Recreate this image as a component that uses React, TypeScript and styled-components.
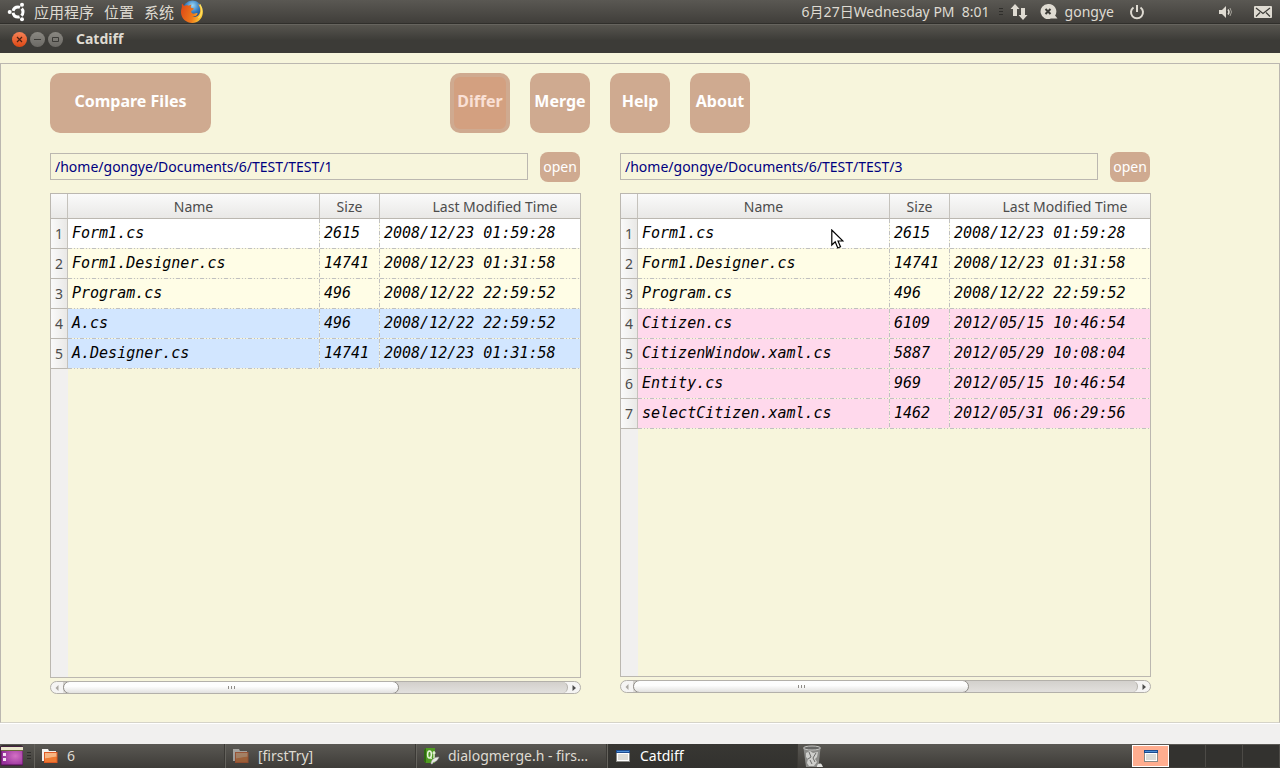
import React from "react";
import styled, { createGlobalStyle, css } from "styled-components";

const UI = `"Noto Sans", "Noto Sans CJK SC", sans-serif`;
const LINE = "#bbb7b0";
const PAPER = "#f7f5dc";

const GlobalStyle = createGlobalStyle`
  * { box-sizing: border-box; }
  body { margin: 0; font: 14px/20px ${UI}; color: #4c4c4c; background: ${PAPER}; }
  button, input { font: inherit; margin: 0; }
`;

const Screen = styled.div`
  display: flex;
  flex-direction: column;
  min-height: 100vh;
  overflow: hidden;
`;

/* ---------- desktop panel ---------- */
const Panel = styled.header`
  display: flex;
  align-items: center;
  height: 24px;
  padding: 0 8px 0 7px;
  color: #dfdbd2;
  background: linear-gradient(#5a5853, #403e3a);
  border-bottom: 1px solid #302f2b;
`;
const MenuList = styled.nav`
  display: flex;
  align-items: center;
  gap: 10px;
  margin-right: 6px;
`;
const PlainButton = styled.button`
  display: flex;
  align-items: center;
  gap: 7px;
  padding: 0;
  border: 0;
  background: none;
  color: inherit;
  font-size: 15px;
  white-space: nowrap;
`;
const Tray = styled.div`
  display: flex;
  align-items: center;
  margin-left: auto;
`;
const Clock = styled.time`
  margin-right: 9px;
  white-space: pre;
`;
const TrayItem = styled(PlainButton)<{ $before: number }>`
  margin-left: ${(p) => p.$before}px;
  font-size: 14px;
`;

/* ---------- window ---------- */
const TitleBar = styled.div`
  display: flex;
  align-items: center;
  height: 29px;
  padding: 0 12px;
  background: linear-gradient(#57554f, #3c3b37 55%);
  border-top: 1px solid #66645e;
`;
const WindowButton = styled.button<{ $close?: boolean }>`
  display: grid;
  place-items: center;
  width: 15px;
  height: 15px;
  margin-right: 3px;
  padding: 0;
  border: 0;
  border-radius: 50%;
  background: ${(p) => (p.$close ? "linear-gradient(#f58257, #dd4814)" : "linear-gradient(#8a8882, #6b6964)")};
`;
const WindowTitle = styled.h1`
  margin: 0 0 0 10px;
  font-size: 14px;
  line-height: 20px;
  color: #dfdbd2;
`;
const Frame = styled.main`
  display: flex;
  flex: 1;
  flex-direction: column;
  margin-top: 10px;
  padding: 9px 128px 28px 49px;
  border: 1px solid ${LINE};
  border-bottom-color: #d5d3c8;
`;
const Toolbar = styled.div`
  display: grid;
  grid-template-columns: 400px auto;
  justify-content: start;
  margin-bottom: 19px;
`;
const ToolGroup = styled.div`
  display: flex;
  gap: 20px;
`;
const ToolButton = styled.button<{ $wide?: boolean; $pressed?: boolean }>`
  width: ${(p) => (p.$wide ? 161 : 60)}px;
  height: 60px;
  padding: 0 0 4px;
  border: 4px solid #cfaa90;
  border-radius: 10px;
  background: #cfaa90;
  color: #fff;
  font-size: 16px;
  font-weight: 700;
  white-space: nowrap;
  ${(p) =>
    p.$pressed &&
    css`
      background: #d3a080;
      color: #fae0d6;
    `}
`;
const Panes = styled.div`
  display: grid;
  flex: 1;
  grid-template-columns: 1fr 1fr;
  gap: 39px;
`;
const Pane = styled.section<{ $bottom: number }>`
  display: flex;
  flex-direction: column;
  min-width: 0;
  padding-bottom: ${(p) => p.$bottom}px;
`;
const PathRow = styled.div`
  display: flex;
  align-items: center;
  gap: 12px;
  height: 30px;
  margin: 0 1px 11px 0;
`;
const PathInput = styled.input`
  && {
    margin-bottom: 1px;
  }
  flex: 1;
  min-width: 0;
  height: 27px;
  padding: 0 4px;
  border: 1px solid ${LINE};
  background: transparent;
  color: #00007f;
  font-size: 14px;
`;
const OpenButton = styled.button`
  width: 40px;
  height: 30px;
  padding: 0;
  border: 0;
  border-radius: 8px;
  background: #cfaa90;
  color: #fff;
  font-size: 14px;
`;
const GridView = styled.div`
  flex: 1;
  min-height: 300px;
  overflow: hidden;
  border: 1px solid ${LINE};
  background: linear-gradient(90deg, #f1f0ef 17px, transparent 17px);
`;
const FileTable = styled.table`
  width: 560px;
  table-layout: fixed;
  border-collapse: separate;
  border-spacing: 0;
`;
const ColumnHead = styled.th`
  height: 25px;
  padding: 2px 0 0;
  border-right: 1px solid #c5c2bc;
  border-bottom: 1px solid ${LINE};
  background: linear-gradient(#fafafa, #e9e8e6);
  font-weight: 400;
  line-height: 22px;
`;
const RowHead = styled.th`
  height: 30px;
  padding: 0;
  border-right: 1px solid #c5c2bc;
  border-bottom: 1px solid ${LINE};
  background: linear-gradient(90deg, #fafafa, #e9e8e6);
  font-weight: 400;
`;
const dash = (angle: string) =>
  `repeating-linear-gradient(${angle}, #c0c0c0 0 4px, ${PAPER} 4px 6px, #c0c0c0 6px 7px, ${PAPER} 7px 9px, #c0c0c0 9px 10px, ${PAPER} 10px 12px)`;
const FileCell = styled.td<{ $tint: string }>`
  height: 30px;
  padding: 0 4px 2px;
  background:
    ${dash("90deg")} left bottom / 100% 1px no-repeat,
    ${dash("180deg")} right top / 1px 100% no-repeat,
    ${(p) => p.$tint};
  color: #000;
  font: italic 15px/20px "DejaVu Sans Mono", monospace;
  white-space: nowrap;
`;
const ScrollTrack = styled.div`
  display: flex;
  align-items: stretch;
  height: 13px;
  margin-top: 3px;
  overflow: hidden;
  border: 1px solid #b3b0aa;
  border-radius: 7px;
  background: #f5f4f3;
`;
const ScrollStep = styled.button`
  display: grid;
  place-items: center;
  width: 12px;
  padding: 0;
  border: 0;
  background: none;
`;
const ScrollGroove = styled.div`
  flex: 1;
  border-right: 1px solid #b3b0aa;
  border-radius: 0 7px 7px 0;
  background: linear-gradient(#d3d0cc, #e2e0dd);
`;
const ScrollThumb = styled.div`
  display: flex;
  align-items: center;
  justify-content: center;
  gap: 2px;
  width: 336px;
  max-width: 80%;
  height: 13px;
  margin-top: -1px;
  border: 1px solid #8f8c87;
  border-radius: 7px;
  background: linear-gradient(#fdfdfd 40%, #e2e1df);
`;
const Grip = styled.i`
  width: 1px;
  height: 3px;
  background: #8f8c87;
`;
const StatusBar = styled.footer`
  height: 21px;
  background: #f1f0ef;
  border-top: 1px solid #fff;
`;

/* ---------- taskbar ---------- */
const TaskBar = styled.footer`
  display: flex;
  height: 24px;
  color: #dfdbd2;
  background: linear-gradient(#5a5853, #3e3c38);
`;
const TaskStart = styled.div`
  display: flex;
  align-items: center;
  gap: 4px;
  width: 34px;
`;
const TaskButton = styled.button<{ $active?: boolean }>`
  display: flex;
  flex: 0 1 191px;
  align-items: center;
  gap: 8px;
  min-width: 0;
  padding: 0 8px 0 6px;
  border: 0;
  border-left: 1px solid #65635d;
  border-right: 1px solid #3b3935;
  background: ${(p) => (p.$active ? "linear-gradient(#383733, #32312e)" : "none")};
  color: ${(p) => (p.$active ? "#fff" : "inherit")};
  font-size: 14px;
  text-align: left;
  white-space: nowrap;
`;
const TrashButton = styled(PlainButton)`
  padding-left: 4px;
`;
const Workspaces = styled.div`
  display: grid;
  grid-template-columns: repeat(4, 37px);
  margin-left: auto;
`;
const Workspace = styled.button<{ $current?: boolean }>`
  display: grid;
  place-items: center;
  padding: 0;
  border: ${(p) => (p.$current ? "1px solid #fff" : "0")};
  border-right: ${(p) => (p.$current ? "1px solid #fff" : "1px solid #4c4a46")};
  background: ${(p) => (p.$current ? "#ffad8f" : "#33322f")};
  && {
    margin: 1px 0;
  }
`;
const Pointer = styled.svg`
  position: absolute;
  left: 831px;
  top: 229px;
  pointer-events: none;
`;

const UbuntuLogo = () => (
  <svg width="20" height="20" viewBox="0 0 20 20" fill="none" aria-hidden="true">
    <circle cx="11" cy="10" r="5" stroke="#fff" strokeWidth="3" strokeDasharray="8.5 2" strokeDashoffset="-6" />
    <circle cx="2.7" cy="10" r="2" fill="#fff" />
    <circle cx="15" cy="2.8" r="2" fill="#fff" />
    <circle cx="15" cy="17.2" r="2" fill="#fff" />
  </svg>
);
const Firefox = () => (
  <svg width="24" height="24" viewBox="0 0 24 24" aria-hidden="true">
    <defs>
      <radialGradient id="globe" cx=".5" cy=".25" r=".7">
        <stop offset="0" stopColor="#9ad7f5" />
        <stop offset=".5" stopColor="#3279bd" />
        <stop offset="1" stopColor="#143570" />
      </radialGradient>
      <linearGradient id="fox" x1="0" x2="1" y1=".3" y2=".6">
        <stop offset="0" stopColor="#df4b16" />
        <stop offset=".6" stopColor="#ee7b1b" />
        <stop offset="1" stopColor="#ffd43a" />
      </linearGradient>
    </defs>
    <circle cx="12.5" cy="10.5" r="10" fill="url(#globe)" />
    <path
      fill="url(#fox)"
      d="M2 3.500 4.200 6c1-.8 3-.8 4.600-.2 1-.9 2-1.100 2.800-1.100-.8.8-1 1.800-.6 2.700.5.8 2.200.5 2.900 1-.2 1.200-1.900 1.700-2.700 2.500-.4 1.700 1.300 3 3.300 2.700 1-.3 2-.8 3.200-.2-.7 2.300-3.400 3.600-6 2.800 4.600 2.200 8.900-1.200 8.500-6.400-.2-2.500-1.200-4.300-2.600-6.200 3.800 1.900 5.700 5.400 5.200 9.700C22.200 19 17.800 23 12.300 23 6.500 23 1.500 18.700 1 13c-.2-3.500.8-4.600.9-6.500C1.800 5.400 1.700 4.400 2 3.500z"
    />
    <path d="M19.800 4.500c3 4.500 2.400 10-1.300 13.600" stroke="#ffe05a" strokeWidth="1.400" fill="none" />
  </svg>
);
const Folder = ({ dim }: { dim?: boolean }) => (
  <svg width="18" height="16" viewBox="0 0 18 16" opacity={dim ? 0.5 : 1} aria-hidden="true">
    <path d="M1 13V1h6l1 2h7v10z" fill="#f4f2ef" />
    <path d="M3 15V4h13.500v11z" fill="#df5a24" />
    <path d="M4 5h11.500v4L4 11z" fill="#f7b582" />
    <path d="M4 10.500 15.500 8.500V14H4z" fill="#ee7a32" />
  </svg>
);
const WindowIcon = ({ padded }: { padded?: boolean }) => (
  <svg width={padded ? 18 : 14} height="12" viewBox={padded ? "-2 0 18 12" : "0 0 14 12"} aria-hidden="true">
    <path d="M0 0h14v12H0z" fill="#8a8a86" />
    <path d="M0 0h14v3H0z" fill="#1c4b8f" />
    <path d="M1 1h12v1H1z" fill="#4f8fd6" />
    <path d="M1 3h12v8H1z" fill="#fff" />
    <path d="M2 4h10v6H2z" fill="#dcdcd8" />
  </svg>
);
const DesktopIcon = () => (
  <svg width="23" height="22" viewBox="0 0 23 22" aria-hidden="true">
    <defs>
      <radialGradient id="wallpaper" cx=".65" cy=".5" r=".6">
        <stop offset="0" stopColor="#d372c4" />
        <stop offset="1" stopColor="#96309b" />
      </radialGradient>
    </defs>
    <rect width="23" height="21" rx="3" fill="#34332f" />
    <path d="M1 2h22v18H1z" fill="url(#wallpaper)" stroke="#551055" />
    <path d="M1 2h22v3H1z" fill="#e9e6cc" />
    <path d="M1 5h22v1H1z" fill="#6d693c" />
    <path d="M3 8h3v3H3zM3 13h3v3H3z" fill="#f4dff2" />
  </svg>
);
const QtIcon = () => (
  <svg width="17" height="18" viewBox="0 0 17 18" aria-hidden="true">
    <path d="M3 1h9v15H3L1 14V3z" fill="#4f9a22" />
    <path d="M1 3 3 1v15l-2-2z" fill="#2e6a12" />
    <ellipse cx="6.500" cy="7.500" rx="1.900" ry="3.500" fill="none" stroke="#e8f5dc" strokeWidth="1.500" />
    <path d="M7 9.500 8.500 12M11 4v7M9.500 6h3" stroke="#e8f5dc" strokeWidth="1.300" />
    <path d="M8 17c0-4 3-7 8-7-1 3-3 5-6 5.500L9.500 17z" fill="#e8e8e5" stroke="#9a9a96" strokeWidth=".5" />
  </svg>
);
const Trash = () => (
  <svg width="22" height="23" viewBox="0 0 22 23" aria-hidden="true">
    <path d="M1.500 3h17l-2 19H4z" fill="#8b8b88" />
    <path d="m4 8 4-2 3 2 5-1-1 5-2 2 2 3-3 4H7l-2-3 1-4-2-2z" fill="#cfcfcc" />
    <path d="m7 7 2 5-3 2m8-6-3 5 2 4m-5-2 2 4" stroke="#6b6b69" fill="none" />
    <ellipse cx="10" cy="3" rx="8.500" ry="2" fill="#676765" stroke="#c4c4c1" />
    <path d="M15 21c1-3 4-3 5-1l1 2h-6z" fill="#e0e0dd" />
  </svg>
);
const HandleDots = () => (
  <svg width="4" height="10" viewBox="0 0 4 10" aria-hidden="true">
    <path d="M0 1.500h4M0 4.500h4M0 7.500h4" stroke="#2f2e2b" />
  </svg>
);

type FileRow = { name: string; size: string; time: string; tint: string };
const SAME = "#ffffff";
const CHANGED = "#fffde6";
const LEFT_ONLY = "#d2e6ff";
const RIGHT_ONLY = "#ffd9ec";

const common: FileRow[] = [
  { name: "Form1.cs", size: "2615", time: "2008/12/23 01:59:28", tint: SAME },
  { name: "Form1.Designer.cs", size: "14741", time: "2008/12/23 01:31:58", tint: CHANGED },
  { name: "Program.cs", size: "496", time: "2008/12/22 22:59:52", tint: CHANGED },
];
const leftFiles: FileRow[] = [
  ...common,
  { name: "A.cs", size: "496", time: "2008/12/22 22:59:52", tint: LEFT_ONLY },
  { name: "A.Designer.cs", size: "14741", time: "2008/12/23 01:31:58", tint: LEFT_ONLY },
];
const rightFiles: FileRow[] = [
  ...common,
  { name: "Citizen.cs", size: "6109", time: "2012/05/15 10:46:54", tint: RIGHT_ONLY },
  { name: "CitizenWindow.xaml.cs", size: "5887", time: "2012/05/29 10:08:04", tint: RIGHT_ONLY },
  { name: "Entity.cs", size: "969", time: "2012/05/15 10:46:54", tint: RIGHT_ONLY },
  { name: "selectCitizen.xaml.cs", size: "1462", time: "2012/05/31 06:29:56", tint: RIGHT_ONLY },
];

const FilePane = ({ label, path, files, bottom }: { label: string; path: string; files: FileRow[]; bottom: number }) => (
  <Pane $bottom={bottom}>
    <PathRow>
      <PathInput aria-label={label} defaultValue={path} />
      <OpenButton>open</OpenButton>
    </PathRow>
    <GridView>
      <FileTable>
        <colgroup>
          <col width="17" />
          <col width="252" />
          <col width="60" />
          <col width="231" />
        </colgroup>
        <thead>
          <tr>
            <ColumnHead />
            <ColumnHead scope="col">Name</ColumnHead>
            <ColumnHead scope="col">Size</ColumnHead>
            <ColumnHead scope="col">Last Modified Time</ColumnHead>
          </tr>
        </thead>
        <tbody>
          {files.map((f, i) => (
            <tr key={f.name}>
              <RowHead scope="row">{i + 1}</RowHead>
              <FileCell $tint={f.tint}>{f.name}</FileCell>
              <FileCell $tint={f.tint}>{f.size}</FileCell>
              <FileCell $tint={f.tint}>{f.time}</FileCell>
            </tr>
          ))}
        </tbody>
      </FileTable>
    </GridView>
    <ScrollTrack>
      <ScrollStep aria-label="Scroll left">
        <svg width="4" height="6" viewBox="0 0 4 6"><path d="M3.500 0v6L.5 3z" fill="#aaa7a2" /></svg>
      </ScrollStep>
      <ScrollGroove>
        <ScrollThumb><Grip /><Grip /><Grip /></ScrollThumb>
      </ScrollGroove>
      <ScrollStep aria-label="Scroll right">
        <svg width="4" height="6" viewBox="0 0 4 6"><path d="M.5 0v6L4 3z" fill="#4c4c4c" /></svg>
      </ScrollStep>
    </ScrollTrack>
  </Pane>
);

export default function App() {
  return (
    <Screen>
      <GlobalStyle />
      <Panel>
        <MenuList>
          <PlainButton><UbuntuLogo />应用程序</PlainButton>
          <PlainButton>位置</PlainButton>
          <PlainButton>系统</PlainButton>
        </MenuList>
        <PlainButton aria-label="Firefox"><Firefox /></PlainButton>
        <Tray>
          <Clock>6月27日Wednesday PM  8:01</Clock>
          <HandleDots />
          <TrayItem $before={7} aria-label="Network">
            <svg width="18" height="18" viewBox="0 0 18 18" fill="#dfdbd2"><path d="M5 1 .5 6H3v7h4V6h2.500zM13 17l4.500-5H15V5h-4v7H8.500z" /></svg>
          </TrayItem>
          <TrayItem $before={12}>
            <svg width="18" height="17" viewBox="0 0 18 17"><path d="M8 1a7.500 7.500 0 1 0 3 14.400l6.500.1-2.400-3A7.500 7.500 0 0 0 8 1z" fill="#dfdbd2" /><path d="m5.500 6 5 5m0-5-5 5" stroke="#3c3b37" strokeWidth="2" /></svg>
            gongye
          </TrayItem>
          <TrayItem $before={15} aria-label="Power">
            <svg width="16" height="16" viewBox="0 0 16 16" fill="none" stroke="#dfdbd2" strokeWidth="2"><path d="M4.500 3.500a6 6 0 1 0 7 0M8 1v7" /></svg>
          </TrayItem>
          <TrayItem $before={74} aria-label="Volume">
            <svg width="14" height="14" viewBox="0 0 14 14"><path d="M0 5h3l4-4v12L3 9H0z" fill="#dfdbd2" /><path d="M9 4.500q2 2.500 0 5" stroke="#dfdbd2" strokeWidth="1.500" fill="none" /><path d="M11 3q3 4 0 8" stroke="#a5a29a" fill="none" /></svg>
          </TrayItem>
          <TrayItem $before={21} aria-label="Messages">
            <svg width="18" height="12" viewBox="0 0 18 12"><rect width="18" height="12" rx="1" fill="#dfdbd2" /><path d="m2 2 7 5.500L16 2M2 10.500l4-4M16 10.500l-4-4" stroke="#3c3b37" strokeWidth="1.200" fill="none" /></svg>
          </TrayItem>
        </Tray>
      </Panel>
      <TitleBar>
        <WindowButton $close aria-label="Close">
          <svg width="7" height="7" viewBox="0 0 7 7"><path d="m1 1 5 5m0-5L1 6" stroke="#4a2012" strokeWidth="1.200" /></svg>
        </WindowButton>
        <WindowButton aria-label="Minimize">
          <svg width="7" height="7" viewBox="0 0 7 7"><path d="M0 3.500h7" stroke="#3c3b37" /></svg>
        </WindowButton>
        <WindowButton aria-label="Maximize">
          <svg width="7" height="7" viewBox="0 0 7 7"><path d="M.5 1.500h6v4h-6z" stroke="#3c3b37" fill="none" /></svg>
        </WindowButton>
        <WindowTitle>Catdiff</WindowTitle>
      </TitleBar>
      <Frame>
        <Toolbar>
          <div><ToolButton $wide>Compare Files</ToolButton></div>
          <ToolGroup>
            <ToolButton $pressed>Differ</ToolButton>
            <ToolButton>Merge</ToolButton>
            <ToolButton>Help</ToolButton>
            <ToolButton>About</ToolButton>
          </ToolGroup>
        </Toolbar>
        <Panes>
          <FilePane label="Left folder" path="/home/gongye/Documents/6/TEST/TEST/1" files={leftFiles} bottom={0} />
          <FilePane label="Right folder" path="/home/gongye/Documents/6/TEST/TEST/3" files={rightFiles} bottom={1} />
        </Panes>
      </Frame>
      <StatusBar />
      <TaskBar>
        <TaskStart><DesktopIcon /><HandleDots /></TaskStart>
        <TaskButton><Folder />6</TaskButton>
        <TaskButton><Folder dim />[firstTry]</TaskButton>
        <TaskButton><QtIcon />dialogmerge.h - firs…</TaskButton>
        <TaskButton $active><WindowIcon padded />Catdiff</TaskButton>
        <TrashButton aria-label="Trash"><Trash /></TrashButton>
        <Workspaces>
          <Workspace $current aria-label="Workspace 1"><WindowIcon /></Workspace>
          <Workspace aria-label="Workspace 2" />
          <Workspace aria-label="Workspace 3" />
          <Workspace aria-label="Workspace 4" />
        </Workspaces>
      </TaskBar>
      <Pointer width="13" height="20" viewBox="0 0 13 20" aria-hidden="true">
        <path d="M.8 1v15l3.400-3.200L6.800 19l2.700-1.200L7 12h5z" fill="#fff" stroke="#000" strokeWidth="1.200" />
      </Pointer>
    </Screen>
  );
}
